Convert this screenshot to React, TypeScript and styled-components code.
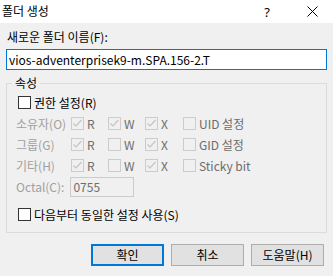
import React from "react";
import styled, { createGlobalStyle } from "styled-components";

const Global = createGlobalStyle`
  html, body { margin: 0; padding: 0; background: #f0f0f0; }
  body {
    font-family: "Noto Sans CJK KR", "Noto Sans", sans-serif;
    font-size: 12px;
    line-height: 16px;
    color: #000;
  }
  * { box-sizing: border-box; }
`;

const Window = styled.div`
  width: 333px;
  height: 276px;
  display: flex;
  flex-direction: column;
  background: #f0f0f0;
  overflow: hidden;
`;

const TitleBar = styled.div`
  height: 23px;
  background: #fff;
  display: flex;
  align-items: center;
  padding-left: 2px;
`;

const Title = styled.div`
  flex: 1;
  margin-top: -2px;
`;

const TitleButton = styled.div<{ $w: number }>`
  width: ${(p) => p.$w}px;
  display: flex;
  justify-content: center;
  align-items: center;
  height: 23px;
  font-family: "Noto Sans", sans-serif;
  font-size: 13px;
`;

const Body = styled.div`
  flex: 1;
  display: flex;
  flex-direction: column;
  padding: 6px 6px 0 6px;
`;

const Label = styled.div`
  padding-left: 1px;
  height: 16px;
`;

const TextInput = styled.div`
  margin-top: 4px;
  height: 21px;
  border: 1px solid #0078d7;
  background: #fff;
  display: flex;
  align-items: center;
  padding-left: 2px;
  white-space: nowrap;
`;

const Group = styled.div`
  position: relative;
  margin-top: 13px;
  border: 1px solid #dcdcdc;
  padding: 8px 0 7px 0;
  display: flex;
  flex-direction: column;
`;

const Legend = styled.div`
  position: absolute;
  top: -9px;
  left: 5px;
  padding: 0 3px;
  background: #f0f0f0;
`;

const Row = styled.div`
  height: 21px;
  display: flex;
  align-items: center;
`;

const CheckRow = styled(Row)<{ $gapTop?: number }>`
  padding-left: 11px;
  margin-top: ${(p) => p.$gapTop ?? 0}px;
`;

const PermRow = styled.div`
  height: 21px;
  display: grid;
  grid-template-columns: 55px 37px 37px 38px 1fr;
  align-items: center;
  padding-left: 9px;
`;

const DimLabel = styled.span`
  color: #a0a0a0;
  white-space: nowrap;
`;

const Item = styled.label<{ $disabled?: boolean }>`
  display: flex;
  align-items: center;
  gap: 3px;
  white-space: nowrap;
  color: ${(p) => (p.$disabled ? "#6d6d6d" : "#000")};
`;

const Box = styled.span<{ $disabled?: boolean }>`
  width: 13px;
  height: 13px;
  flex: none;
  border: 1px solid ${(p) => (p.$disabled ? "#cccccc" : "#333333")};
  background: ${(p) => (p.$disabled ? "transparent" : "#fff")};
  display: flex;
  align-items: center;
  justify-content: center;
`;

const OctalRow = styled(Row)`
  padding-left: 9px;
`;

const OctalInput = styled.div`
  margin-left: 6px;
  width: 64px;
  height: 20px;
  border: 1px solid #cccccc;
  background: #f0f0f0;
  color: #6d6d6d;
  display: flex;
  align-items: center;
  padding-left: 2px;
`;

const ButtonBar = styled.div`
  margin-top: 11px;
  display: flex;
  justify-content: flex-end;
  gap: 7px;
  padding-right: 3px;
`;

const Button = styled.div<{ $default?: boolean }>`
  width: 73px;
  height: 22px;
  background: #e1e1e1;
  border: ${(p) => (p.$default ? "2px solid #0078d7" : "1px solid #adadad")};
  display: flex;
  align-items: center;
  justify-content: center;
`;

const Check = () => (
  <svg width="11" height="11" viewBox="0 0 11 11">
    <path d="M1.5 5.5 L4 8 L9.5 2" fill="none" stroke="#c4c4c4" strokeWidth="1.2" />
  </svg>
);

const CheckBox = ({ label, checked, disabled }: { label: string; checked?: boolean; disabled?: boolean }) => (
  <Item $disabled={disabled}>
    <Box $disabled={disabled}>{checked && <Check />}</Box>
    <span>{label}</span>
  </Item>
);

const perms: { label: string; r: boolean; w: boolean; x: boolean; extra: string }[] = [
  { label: "소유자(O)", r: true, w: true, x: true, extra: "UID 설정" },
  { label: "그룹(G)", r: true, w: false, x: true, extra: "GID 설정" },
  { label: "기타(H)", r: true, w: false, x: true, extra: "Sticky bit" },
];

export default function App() {
  return (
    <Window>
      <Global />
      <TitleBar>
        <Title>폴더 생성</Title>
        <TitleButton $w={42}>?</TitleButton>
        <TitleButton $w={3} />
        <TitleButton $w={42}>
          <svg width="11" height="11" viewBox="0 0 11 11">
            <path d="M0.5 0.5 L10.5 10.5 M10.5 0.5 L0.5 10.5" stroke="#000" strokeWidth="1" />
          </svg>
        </TitleButton>
      </TitleBar>
      <Body>
        <Label>새로운 폴더 이름(F):</Label>
        <TextInput>vios-adventerprisek9-m.SPA.156-2.T</TextInput>
        <Group>
          <Legend>속성</Legend>
          <CheckRow>
            <CheckBox label="권한 설정(R)" />
          </CheckRow>
          {perms.map((p) => (
            <PermRow key={p.label}>
              <DimLabel>{p.label}</DimLabel>
              <CheckBox label="R" checked={p.r} disabled />
              <CheckBox label="W" checked={p.w} disabled />
              <CheckBox label="X" checked={p.x} disabled />
              <CheckBox label={p.extra} disabled />
            </PermRow>
          ))}
          <OctalRow>
            <DimLabel>Octal(C):</DimLabel>
            <OctalInput>0755</OctalInput>
          </OctalRow>
          <CheckRow $gapTop={7}>
            <CheckBox label="다음부터 동일한 설정 사용(S)" />
          </CheckRow>
        </Group>
        <ButtonBar>
          <Button $default>확인</Button>
          <Button>취소</Button>
          <Button>도움말(H)</Button>
        </ButtonBar>
      </Body>
    </Window>
  );
}
